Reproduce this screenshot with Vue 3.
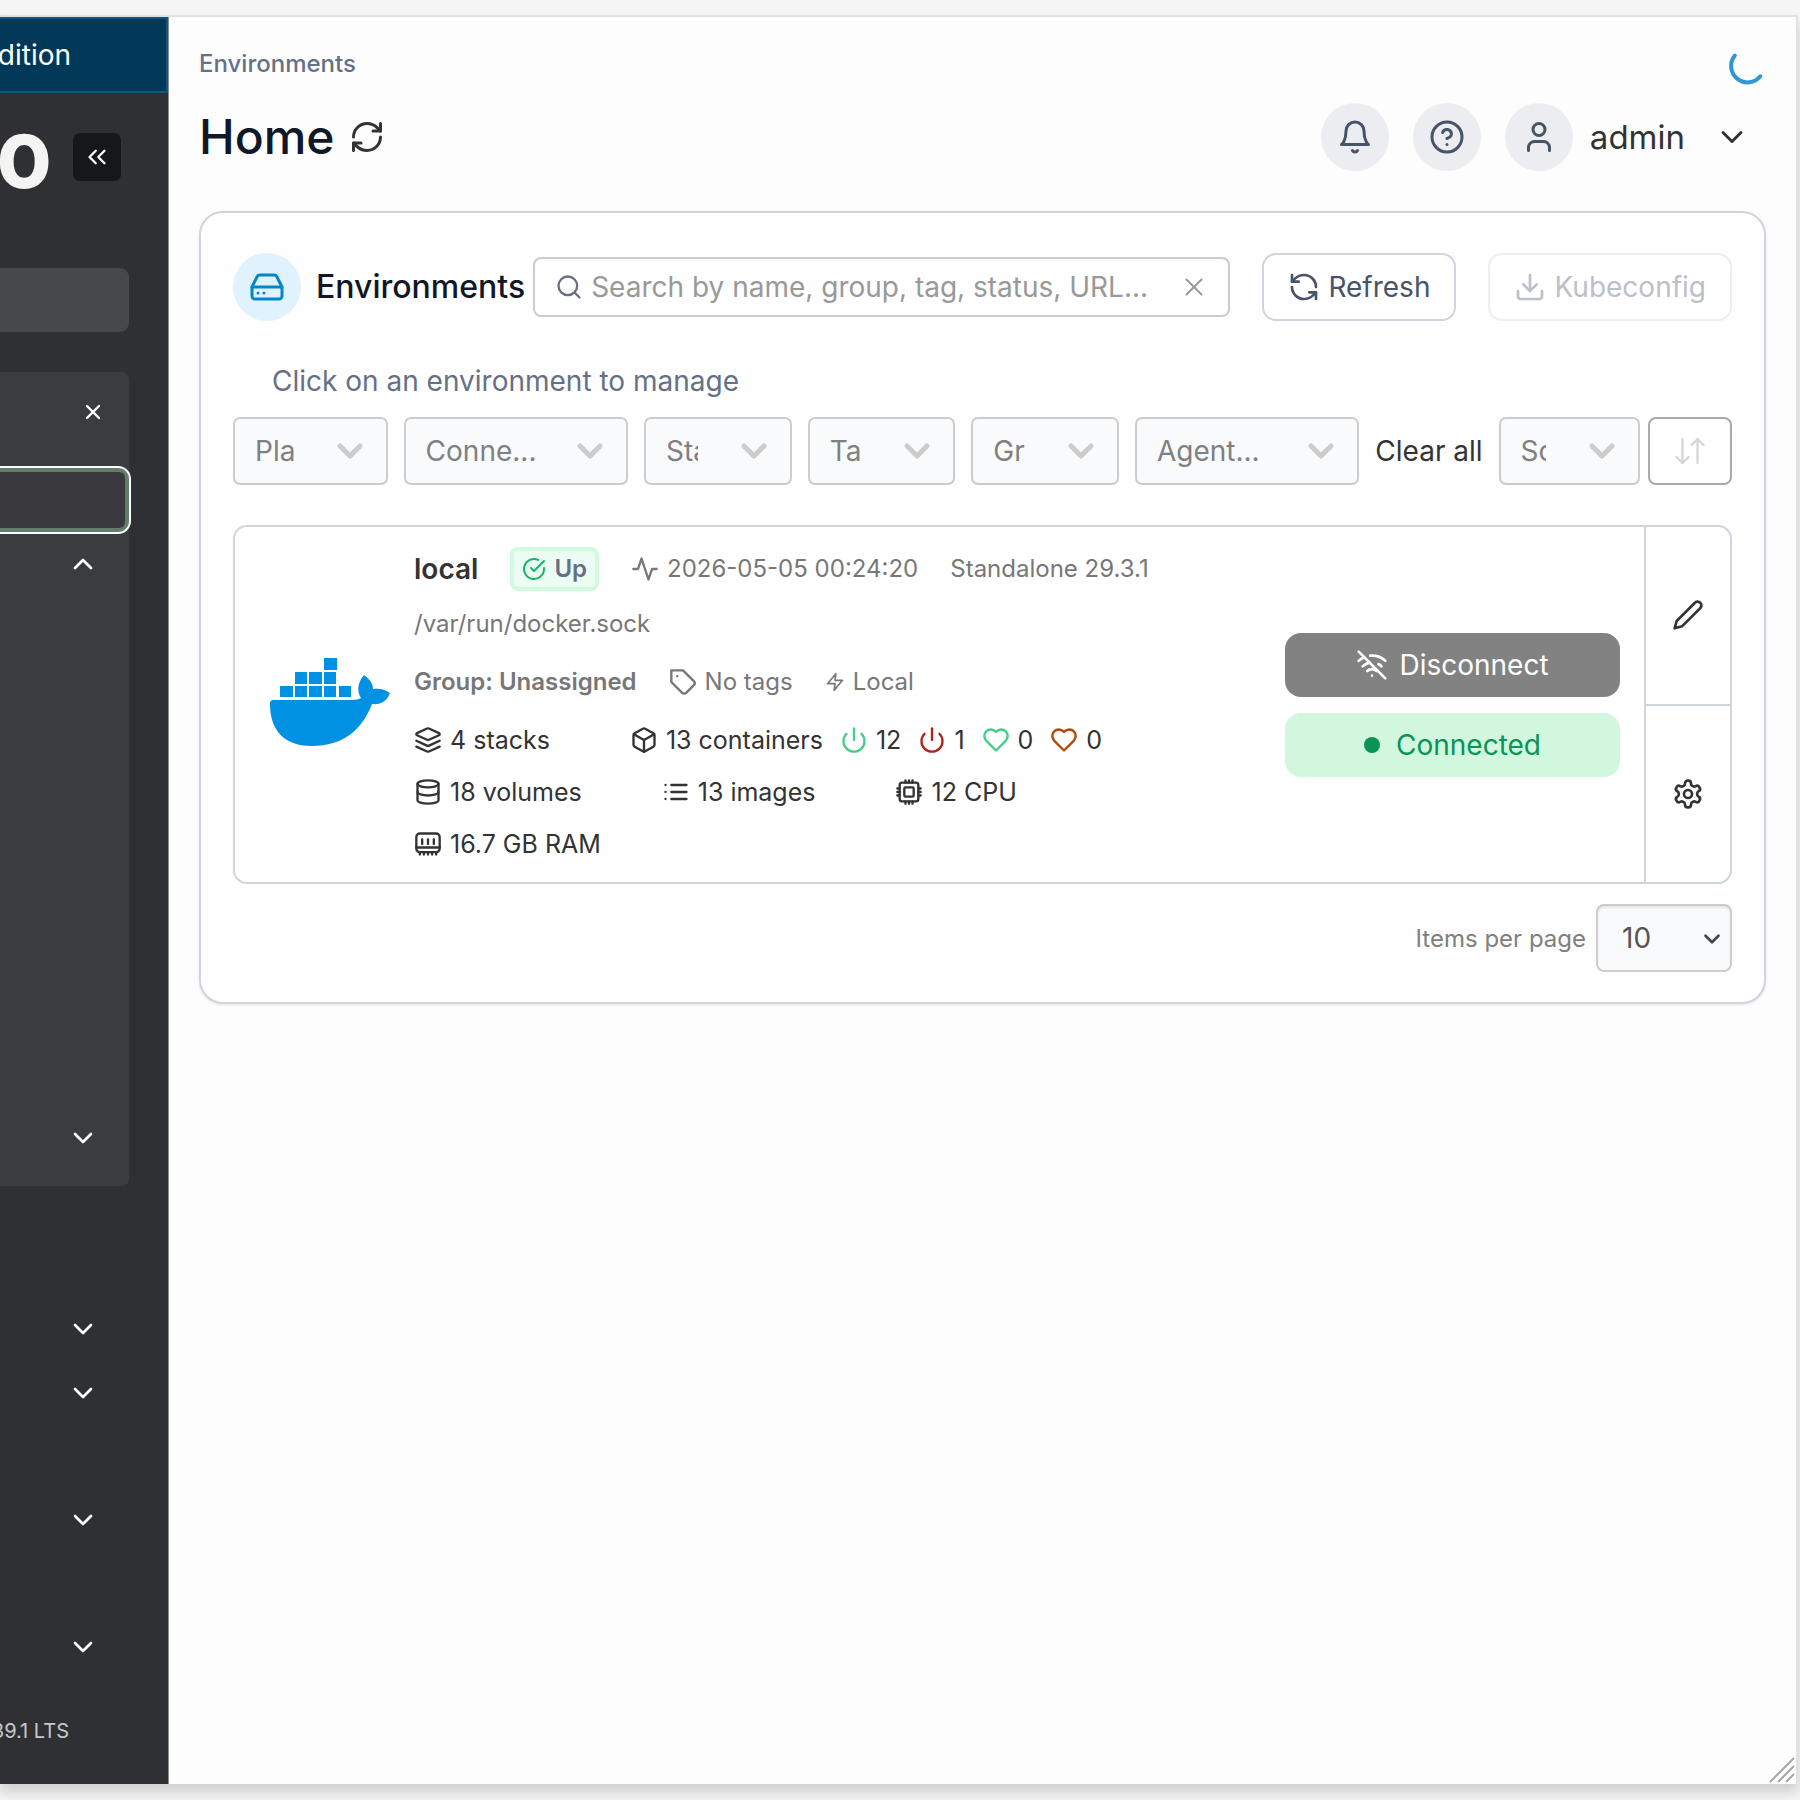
<script setup>
import { h, ref } from 'vue'

const glyphs = {
  chevronDown: '<path d="m6 9 6 6 6-6"/>',
  chevronUp: '<path d="m18 15-6-6-6 6"/>',
  chevronsLeft: '<path d="m11 17-5-5 5-5"/><path d="m18 17-5-5 5-5"/>',
  x: '<path d="M18 6 6 18"/><path d="m6 6 12 12"/>',
  refreshCw: '<path d="M3 12a9 9 0 0 1 9-9 9.75 9.75 0 0 1 6.74 2.74L21 8"/><path d="M21 3v5h-5"/><path d="M21 12a9 9 0 0 1-9 9 9.75 9.75 0 0 1-6.74-2.74L3 16"/><path d="M8 16H3v5"/>',
  refreshCcw: '<path d="M21 12a9 9 0 0 0-9-9 9.75 9.75 0 0 0-6.74 2.74L3 8"/><path d="M3 3v5h5"/><path d="M3 12a9 9 0 0 0 9 9 9.75 9.75 0 0 0 6.74-2.74L21 16"/><path d="M16 16h5v5"/>',
  bell: '<path d="M6 8a6 6 0 0 1 12 0c0 7 3 9 3 9H3s3-2 3-9"/><path d="M10.3 21a1.94 1.94 0 0 0 3.4 0"/>',
  help: '<circle cx="12" cy="12" r="10"/><path d="M9.09 9a3 3 0 0 1 5.83 1c0 2-3 3-3 3"/><path d="M12 17h.01"/>',
  user: '<path d="M19 21v-2a4 4 0 0 0-4-4H9a4 4 0 0 0-4 4v2"/><circle cx="12" cy="7" r="4"/>',
  hardDrive: '<path d="M22 12H2"/><path d="M5.45 5.11 2 12v6a2 2 0 0 0 2 2h16a2 2 0 0 0 2-2v-6l-3.45-6.89A2 2 0 0 0 16.76 4H7.24a2 2 0 0 0-1.79 1.11z"/><path d="M6 16h.01"/><path d="M10 16h.01"/>',
  search: '<circle cx="11" cy="11" r="8"/><path d="m21 21-4.3-4.3"/>',
  download: '<path d="M21 15v4a2 2 0 0 1-2 2H5a2 2 0 0 1-2-2v-4"/><path d="m7 10 5 5 5-5"/><path d="M12 15V3"/>',
  sort: '<path d="M7 4v16"/><path d="m3 16 4 4 4-4"/><path d="M17 20V4"/><path d="m13 8 4-4 4 4"/>',
  checkCircle: '<path d="M22 11.08V12a10 10 0 1 1-5.93-9.14"/><path d="m9 11 3 3L22 4"/>',
  activity: '<path d="M22 12h-4l-3 9L9 3l-3 9H2"/>',
  tag: '<path d="M12 2H2v10l9.29 9.29c.94.94 2.48.94 3.42 0l6.58-6.58c.94-.94.94-2.48 0-3.42L12 2Z"/><path d="M7 7h.01"/>',
  zap: '<path d="M13 2 3 14h9l-1 8 10-12h-9l1-8z"/>',
  layers: '<path d="m12.83 2.18a2 2 0 0 0-1.66 0L2.6 6.08a1 1 0 0 0 0 1.83l8.58 3.91a2 2 0 0 0 1.66 0l8.58-3.9a1 1 0 0 0 0-1.83Z"/><path d="m22 12.65-9.17 4.16a2 2 0 0 1-1.66 0L2 12.65"/><path d="m22 17.65-9.17 4.16a2 2 0 0 1-1.66 0L2 17.65"/>',
  box: '<path d="M21 8a2 2 0 0 0-1-1.73l-7-4a2 2 0 0 0-2 0l-7 4A2 2 0 0 0 3 8v8a2 2 0 0 0 1 1.73l7 4a2 2 0 0 0 2 0l7-4A2 2 0 0 0 21 16Z"/><path d="m3.3 7 8.7 5 8.7-5"/><path d="M12 22V12"/>',
  power: '<path d="M18.36 6.64a9 9 0 1 1-12.73 0"/><path d="M12 2v10"/>',
  heart: '<path d="M19 14c1.49-1.46 3-3.21 3-5.5A5.5 5.5 0 0 0 16.5 3c-1.76 0-3 .5-4.5 2-1.5-1.5-2.74-2-4.5-2A5.5 5.5 0 0 0 2 8.5c0 2.3 1.5 4.05 3 5.5l7 7Z"/>',
  database: '<ellipse cx="12" cy="5" rx="9" ry="3"/><path d="M3 5v14a9 3 0 0 0 18 0V5"/><path d="M3 12a9 3 0 0 0 18 0"/>',
  list: '<path d="M8 6h13M8 12h13M8 18h13M3 6h.01M3 12h.01M3 18h.01"/>',
  cpu: '<rect x="4" y="4" width="16" height="16" rx="2"/><rect x="8" y="8" width="8" height="8" rx="1"/><path d="M15 2v2M15 20v2M2 15h2M2 9h2M20 15h2M20 9h2M9 2v2M9 20v2M12 2v2M12 20v2M2 12h2M20 12h2"/>',
  memory: '<rect x="2" y="3" width="20" height="16" rx="3"/><path d="M2 15h20M7 8v4M12 8v4M17 8v4M5 19v2M8.5 19v2M12 19v2M15.5 19v2M19 19v2"/>',
  wifiOff: '<path d="m2 2 20 20"/><path d="M8.5 16.5a5 5 0 0 1 7 0"/><path d="M2 8.82a15 15 0 0 1 4.17-2.65"/><path d="M10.66 5c4.01-.36 8.14.9 11.34 3.76"/><path d="M16.85 11.25a10 10 0 0 1 2.22 1.68"/><path d="M5 13a10 10 0 0 1 5.24-2.76"/><path d="M12 20h.01"/>',
  pencil: '<path d="M17 3a2.85 2.83 0 1 1 4 4L7.5 20.5 2 22l1.5-5.5Z"/>',
  settings: '<path d="M12.22 2h-.44a2 2 0 0 0-2 2v.18a2 2 0 0 1-1 1.73l-.43.25a2 2 0 0 1-2 0l-.15-.08a2 2 0 0 0-2.73.73l-.22.38a2 2 0 0 0 .73 2.73l.15.1a2 2 0 0 1 1 1.72v.51a2 2 0 0 1-1 1.74l-.15.09a2 2 0 0 0-.73 2.73l.22.38a2 2 0 0 0 2.73.73l.15-.08a2 2 0 0 1 2 0l.43.25a2 2 0 0 1 1 1.73V20a2 2 0 0 0 2 2h.44a2 2 0 0 0 2-2v-.18a2 2 0 0 1 1-1.73l.43-.25a2 2 0 0 1 2 0l.15.08a2 2 0 0 0 2.73-.73l.22-.39a2 2 0 0 0-.73-2.73l-.15-.08a2 2 0 0 1-1-1.74v-.5a2 2 0 0 1 1-1.74l.15-.09a2 2 0 0 0 .73-2.73l-.22-.38a2 2 0 0 0-2.73-.73l-.15.08a2 2 0 0 1-2 0l-.43-.25a2 2 0 0 1-1-1.73V4a2 2 0 0 0-2-2z"/><circle cx="12" cy="12" r="3"/>',
  spinner: '<path d="M4.7 5.1A9.5 9.5 0 1 0 20 17.6"/>'
}

const Icon = (props) =>
  h('svg', {
    viewBox: '0 0 24 24',
    width: props.size || 28,
    height: props.size || 28,
    fill: 'none',
    stroke: 'currentColor',
    'stroke-width': props.weight || 2,
    'stroke-linecap': 'round',
    'stroke-linejoin': 'round',
    'aria-hidden': 'true',
    innerHTML: glyphs[props.name]
  })
Icon.props = ['name', 'size', 'weight']

const filters = [
  { text: 'Pla', size: 'medium' },
  { text: 'Conne...', size: 'large' },
  { text: 'Sta', size: 'small' },
  { text: 'Ta', size: 'small' },
  { text: 'Gr', size: 'small' },
  { text: 'Agent...', size: 'large' }
]
const containerStates = [
  { icon: 'power', tone: 'green', count: 12 },
  { icon: 'power', tone: 'red', count: 1 },
  { icon: 'heart', tone: 'green', count: 0 },
  { icon: 'heart', tone: 'orange', count: 0 }
]
const search = ref('')
</script>

<template>
  <div class="page">
    <div class="window">
      <aside class="sidebar">
        <div class="edition">dition</div>
        <div class="brand">
          <span class="logo">io</span>
          <button class="collapse" aria-label="Collapse sidebar"><Icon name="chevronsLeft" size="30" weight="1.8" /></button>
        </div>
        <div class="home-link"></div>
        <nav class="env-menu">
          <button class="side-btn close" aria-label="Close environment"><Icon name="x" size="24" weight="2.4" /></button>
          <div class="active-link"></div>
          <button class="side-btn up" aria-label="Collapse"><Icon name="chevronUp" size="32" /></button>
          <button class="side-btn last" aria-label="Expand"><Icon name="chevronDown" size="32" /></button>
        </nav>
        <nav class="admin-menu">
          <button class="side-btn" aria-label="Expand"><Icon name="chevronDown" size="32" /></button>
          <button class="side-btn near" aria-label="Expand"><Icon name="chevronDown" size="32" /></button>
          <button class="side-btn" aria-label="Expand"><Icon name="chevronDown" size="32" /></button>
          <button class="side-btn" aria-label="Expand"><Icon name="chevronDown" size="32" /></button>
        </nav>
        <div class="version">39.1 LTS</div>
      </aside>

      <main class="main">
        <Icon class="spinner" name="spinner" size="40" weight="2.4" />
        <div class="crumb">Environments</div>
        <header class="page-head">
          <h1>Home</h1>
          <button class="plain reload" aria-label="Reload"><Icon name="refreshCw" size="36" /></button>
          <div class="account">
            <button class="round" aria-label="Notifications"><Icon name="bell" size="36" /></button>
            <button class="round" aria-label="Help"><Icon name="help" size="36" /></button>
            <button class="plain user">
              <span class="round"><Icon name="user" size="36" /></span>
              <span class="user-name">admin</span>
              <Icon name="chevronDown" size="36" />
            </button>
          </div>
        </header>

        <section class="card">
          <div class="card-head">
            <span class="round blue"><Icon name="hardDrive" size="36" /></span>
            <h2>Environments</h2>
            <div class="search">
              <Icon name="search" size="28" />
              <input v-model="search" type="text" aria-label="Search environments" placeholder="Search by name, group, tag, status, URL..." />
              <button class="plain" aria-label="Clear search"><Icon name="x" size="30" weight="1.6" /></button>
            </div>
            <button class="action"><Icon name="refreshCcw" size="32" />Refresh</button>
            <button class="action disabled" disabled><Icon name="download" size="32" />Kubeconfig</button>
          </div>
          <p class="hint">Click on an environment to manage</p>
          <div class="filters">
            <div v-for="f in filters" :key="f.text" class="filter" :class="f.size">
              <select :aria-label="f.text"><option>{{ f.text }}</option></select>
              <Icon name="chevronDown" size="40" weight="3" />
            </div>
            <button class="plain clear">Clear all</button>
            <div class="sorting">
              <div class="filter sort-by">
                <select aria-label="So"><option>So</option></select>
                <Icon name="chevronDown" size="40" weight="3" />
              </div>
              <button class="sort" aria-label="Sort order"><Icon name="sort" size="36" weight="1.5" /></button>
            </div>
          </div>

          <article class="env">
            <svg class="docker" viewBox="0 0 120 88" aria-hidden="true">
              <path fill="#0091e2" d="M4 42H82c4 0 7-1 9-2-4-6-4-15 3-23 5 4 9 8 9 14 6-1 12 0 17 4-3 8-9 12-18 11C92 72 73 88 42 88 12 88 0 70 0 46c0-3 1-4 4-4Z" />
              <g fill="#0091e2">
                <rect x="10" y="28" width="13" height="11" /><rect x="25" y="28" width="12" height="11" /><rect x="39" y="28" width="13" height="11" /><rect x="54" y="28" width="12" height="11" /><rect x="69" y="28" width="12" height="11" />
                <rect x="25" y="14" width="12" height="12" /><rect x="39" y="14" width="13" height="12" /><rect x="54" y="14" width="12" height="12" /><rect x="54" y="0" width="13" height="12" />
              </g>
            </svg>
            <div class="info">
              <div class="row title">
                <strong class="name">local</strong>
                <span class="badge"><Icon name="checkCircle" size="24" />Up</span>
                <span class="pair"><Icon name="activity" />2026-05-05 00:24:20</span>
                <span>Standalone 29.3.1</span>
              </div>
              <div class="row path">/var/run/docker.sock</div>
              <div class="row group">
                <strong>Group: Unassigned</strong>
                <span class="pair"><Icon name="tag" />No tags</span>
                <span class="pair"><Icon name="zap" size="20" />Local</span>
              </div>
              <div class="stats">
                <span class="pair"><Icon name="layers" />4 stacks</span>
                <div class="containers">
                  <span class="pair"><Icon name="box" />13 containers</span>
                  <span v-for="(s, i) in containerStates" :key="i" class="pair"><Icon :name="s.icon" :class="s.tone" />{{ s.count }}</span>
                </div>
                <span class="pair"><Icon name="database" />18 volumes</span>
                <span class="pair"><Icon name="list" />13 images</span>
                <span class="pair"><Icon name="cpu" />12 CPU</span>
                <span class="pair"><Icon name="memory" />16.7 GB RAM</span>
              </div>
            </div>
            <div class="connection">
              <button class="disconnect"><Icon name="wifiOff" size="32" />Disconnect</button>
              <div class="connected"><i class="dot"></i>Connected</div>
            </div>
            <div class="tools">
              <button aria-label="Edit"><Icon name="pencil" size="32" /></button>
              <button aria-label="Settings"><Icon name="settings" size="32" /></button>
            </div>
          </article>

          <footer class="pager">
            <label for="per-page">Items per page</label>
            <div class="per-page">
              <select id="per-page"><option>10</option></select>
              <Icon name="chevronDown" size="26" weight="2.4" />
            </div>
          </footer>
        </section>
        <svg class="grip" viewBox="0 0 26 26" aria-hidden="true"><path d="M1 25 25 1M9 25 25 9M17 25 25 17" stroke="#a6a6a6" stroke-width="2" fill="none" /></svg>
      </main>
    </div>
  </div>
</template>

<style>
body { margin: 0; background: #f5f5f5; }
</style>

<style scoped>
* { box-sizing: border-box; }
svg { flex: none; display: block; }
button, input, select { font: inherit; color: inherit; margin: 0; }
button { cursor: pointer; padding: 0; }
.page {
  min-height: 100vh;
  padding: 15px 2px 16px 0;
  overflow: hidden;
  font-family: Inter, "Liberation Sans", sans-serif;
  font-size: 28px;
  color: #333;
}
.window {
  display: flex;
  min-height: calc(100vh - 31px);
  border: 2px solid #e0e2e2;
  border-width: 2px 2px 0 0;
  box-shadow: 0 8px 12px rgba(0, 0, 0, 0.16);
  background: #fdfdfd;
}
.sidebar {
  flex: none;
  width: 169px;
  overflow: hidden;
  background: #2f3034;
  border-right: 1px solid #8a8b8e;
  color: #fff;
}
.edition {
  display: flex;
  align-items: center;
  justify-content: flex-end;
  height: 76px;
  padding-right: 95px;
  border: 2px solid #0b5786;
  border-left: 0;
  background: #023959;
}
.brand {
  display: flex;
  align-items: center;
  justify-content: flex-end;
  height: 128px;
  padding-right: 47px;
  gap: 20px;
}
.logo {
  font: 700 96px/88px "DejaVu Sans Mono", monospace;
  padding-bottom: 4px;
  color: #f4f4f2;
}
.collapse {
  display: grid;
  place-items: center;
  flex: none;
  width: 48px;
  height: 48px;
  border: 0;
  border-radius: 7px;
  background: #161719;
  color: #fff;
}
.home-link {
  height: 64px;
  margin: 47px 39px 0 0;
  border-radius: 0 9px 9px 0;
  background: #47484c;
}
.env-menu {
  display: flex;
  flex-direction: column;
  align-items: flex-end;
  height: 814px;
  margin: 40px 39px 0 0;
  padding-bottom: 32px;
  border-radius: 0 7px 7px 0;
  background: #3b3c40;
}
.side-btn {
  display: block;
  margin-right: 30px;
  border: 0;
  background: none;
  color: #fff;
}
.close { margin: 28px 24px 0 0; }
.active-link {
  align-self: stretch;
  height: 68px;
  margin: 42px -2px 0 0;
  border: 2px solid #fff;
  border-left: 0;
  border-radius: 0 13px 13px 0;
  box-shadow: inset -4px 0 #637d6c, inset 0 4px #637d6c, inset 0 -4px #637d6c;
  background: #39393e;
}
.up { margin-top: 14px; }
.last { margin-top: auto; }
.admin-menu {
  display: flex;
  flex-direction: column;
  align-items: flex-end;
  gap: 95px;
  margin-right: 39px;
  padding-top: 127px;
}
.near { margin: -63px 30px 0 0; }
.version {
  display: flex;
  justify-content: flex-end;
  margin-top: 56px;
  padding-right: 99px;
  font-size: 20px;
  line-height: 24px;
  white-space: nowrap;
  color: #c8c8ca;
}
.main {
  position: relative;
  flex: 1;
  min-width: 0;
  padding: 33px 30px 40px 30px;
}
.spinner { position: absolute; top: 30px; right: 29px; color: #2e97d4; }
.crumb { font-size: 24px; font-weight: 500; line-height: 28px; color: #667085; }
.page-head { display: flex; align-items: center; height: 68px; margin: 25px 0 40px; }
h1 { margin: 0; font-size: 48px; font-weight: 500; line-height: 60px; color: #101828; }
.plain { border: 0; background: none; }
.reload { margin-left: 14px; }
.account { display: flex; gap: 24px; margin-left: auto; padding-right: 16px; }
.round {
  display: grid;
  place-items: center;
  flex: none;
  width: 68px;
  height: 68px;
  border: 0;
  border-radius: 50%;
  background: #ebedf1;
  color: #475467;
}
.blue { background: #e0f2fe; color: #0086c9; }
.user { display: flex; align-items: center; }
.user-name { margin: 0 29px 0 17px; font-size: 33px; }
.card {
  padding: 40px 32px 30px;
  border: 2px solid #d0d5dd;
  border-radius: 24px;
  background: #fefefe;
  box-shadow: 0 1px 3px rgba(16, 24, 40, 0.1);
}
.card-head { display: flex; align-items: center; height: 68px; }
h2 { margin: 0 8px 0 15px; font-size: 32px; font-weight: 500; line-height: 40px; color: #101828; }
.search {
  display: flex;
  align-items: center;
  flex: 1;
  min-width: 0;
  height: 60px;
  padding: 0 19px 0 20px;
  border: 2px solid #ccc;
  border-radius: 8px;
  color: #667085;
}
.search input { flex: 1; min-width: 0; margin-left: 8px; padding: 0; border: 0; outline: 0; background: none; }
.search input::placeholder { color: #999; opacity: 1; }
.search button { color: #999; }
.action {
  display: flex;
  align-items: center;
  gap: 8px;
  height: 68px;
  margin-left: 32px;
  padding: 0 24px;
  border: 2px solid #d0d5dd;
  border-radius: 14px;
  background: #fff;
  color: #475467;
}
.disabled { border-color: #eceef1; color: #bcc0c8; }
.hint { margin: 42px 0 18px; padding-left: 39px; line-height: 36px; color: #667085; }
.filters { display: flex; align-items: center; gap: 16px; }
.filter { position: relative; min-width: 0; height: 68px; color: #ccc; }
.filter select {
  appearance: none;
  width: 100%;
  height: 100%;
  padding: 0 92px 0 20px;
  border: 2px solid #ccc;
  border-radius: 7px;
  background: #f9fafb;
  color: #808080;
  text-overflow: clip;
}
.filter svg { position: absolute; top: 14px; right: 18px; pointer-events: none; }
.small { flex: 148 1 0; }
.medium { flex: 155 1 0; }
.large { flex: 225 1 0; }
.large select { padding-right: 70px; }
.clear { flex: none; }
.sorting { display: flex; flex: 234 1 0; gap: 8px; min-width: 0; }
.sort-by { flex: 1; }
.sort {
  display: grid;
  place-items: center;
  flex: none;
  width: 84px;
  height: 68px;
  border: 2px solid #aaa;
  border-radius: 8px;
  background: #fff;
  color: #d0d5dd;
}
.env {
  display: flex;
  margin-top: 40px;
  border: 2px solid #d0d5dd;
  border-radius: 14px;
  background: #fff;
}
.docker { align-self: center; width: 120px; height: 88px; margin: 0 24px 6px 35px; }
.info { flex: 1; min-width: 0; padding: 20px 0 12px; font-size: 24px; color: #777; }
.row { display: flex; align-items: center; gap: 32px; line-height: 32px; }
.title { height: 44px; }
.path { margin-top: 17px; }
.group { margin: 26px 0 16px; }
.name { font-size: 28px; color: #333; }
strong { font-weight: 600; }
.badge {
  display: flex;
  align-items: center;
  gap: 8px;
  height: 44px;
  padding: 0 8px;
  border: 4px solid #d1fadf;
  border-radius: 8px;
  background: #ecfdf3;
  font-weight: 600;
  color: #667085;
}
.badge svg { color: #12b76a; }
.pair { display: flex; align-items: center; gap: 8px; white-space: nowrap; }
.stats { display: flex; flex-wrap: wrap; column-gap: 80px; font-size: 25px; line-height: 52px; color: #333; }
.containers { display: flex; gap: 17px; }
.green { color: #47cd89; }
.red { color: #b42318; }
.orange { color: #b54708; }
.connection {
  flex: none;
  display: flex;
  flex-direction: column;
  justify-content: center;
  gap: 16px;
  width: 335px;
  margin: 0 24px;
}
.disconnect, .connected {
  display: flex;
  align-items: center;
  justify-content: center;
  gap: 11px;
  height: 64px;
  border: 0;
  border-radius: 16px;
}
.disconnect { background: #828283; color: #fff; }
.connected { gap: 16px; background: #d1f7df; color: #079455; }
.dot { width: 16px; height: 16px; border-radius: 50%; background: #079455; }
.tools { flex: none; display: flex; flex-direction: column; width: 86px; border-left: 2px solid #d0d5dd; }
.tools button { display: grid; place-items: center; flex: 1; border: 0; background: none; }
.tools button + button { border-top: 2px solid #d0d5dd; }
.pager { display: flex; align-items: center; justify-content: flex-end; gap: 10px; margin-top: 20px; font-size: 24px; color: #808080; }
.per-page { position: relative; width: 136px; height: 68px; font-size: 28px; color: #444; }
.per-page select {
  appearance: none;
  width: 100%;
  height: 100%;
  padding: 0 24px;
  border: 2px solid #ccc;
  border-radius: 8px;
  background: #f9fafb;
  box-shadow: inset 0 2px 2px rgba(0, 0, 0, 0.08);
  color: #555;
}
.per-page svg { position: absolute; top: 22px; right: 7px; pointer-events: none; }
.grip { position: absolute; right: 1px; bottom: 1px; width: 26px; height: 26px; }
</style>
